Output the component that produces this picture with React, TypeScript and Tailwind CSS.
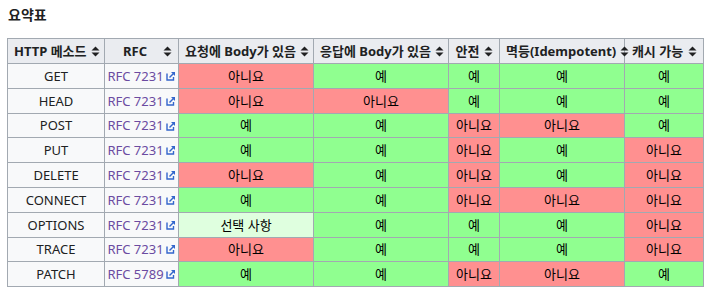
const Y = 'y';
const N = 'n';
const O = 'o';

const rows: { method: string; rfc: string; cells: string[] }[] = [
  { method: 'GET', rfc: 'RFC 7231', cells: [N, Y, Y, Y, Y] },
  { method: 'HEAD', rfc: 'RFC 7231', cells: [N, N, Y, Y, Y] },
  { method: 'POST', rfc: 'RFC 7231', cells: [Y, Y, N, N, Y] },
  { method: 'PUT', rfc: 'RFC 7231', cells: [Y, Y, N, Y, N] },
  { method: 'DELETE', rfc: 'RFC 7231', cells: [N, Y, N, Y, N] },
  { method: 'CONNECT', rfc: 'RFC 7231', cells: [Y, Y, N, N, N] },
  { method: 'OPTIONS', rfc: 'RFC 7231', cells: [O, Y, Y, Y, N] },
  { method: 'TRACE', rfc: 'RFC 7231', cells: [N, Y, Y, Y, N] },
  { method: 'PATCH', rfc: 'RFC 5789', cells: [Y, Y, N, N, Y] },
];

const headers = [
  { label: 'HTTP 메소드', w: 'w-[97px]' },
  { label: 'RFC', w: 'w-[74px]' },
  { label: '요청에 Body가 있음', w: 'w-[135px]' },
  { label: '응답에 Body가 있음', w: 'w-[135px]' },
  { label: '안전', w: 'w-[51px]' },
  { label: '멱등(Idempotent)', w: 'w-[125px]' },
  { label: '캐시 가능', w: 'w-[79px]' },
];

function SortIcon() {
  return (
    <svg width="9" height="11" viewBox="0 0 9 11" className="shrink-0">
      <path d="M4.5 0.5 L8.5 4.5 H0.5 Z" fill="#202122" />
      <path d="M4.5 10.5 L8.5 6.5 H0.5 Z" fill="#202122" />
    </svg>
  );
}

function ExtIcon() {
  return (
    <svg width="10" height="10" viewBox="0 0 10 10" className="inline-block ml-[2px] -mt-[3px] align-middle">
      <path d="M1 2.5 V9 H7.5 V6" fill="none" stroke="#3366cc" strokeWidth="1.4" />
      <path d="M5 1 H9 V5 Z" fill="#3366cc" />
      <path d="M8.5 1.5 L3.5 6.5" stroke="#3366cc" strokeWidth="1.5" />
    </svg>
  );
}

function Cell({ v }: { v: string }) {
  if (v === Y) return <td className="border border-[#a2a9b1] bg-[#90ff90] text-center text-black">예</td>;
  if (v === N) return <td className="border border-[#a2a9b1] bg-[#ff9090] text-center text-black">아니요</td>;
  return <td className="border border-[#a2a9b1] bg-[#dfffdf] text-center text-black">선택 사항</td>;
}

export default function App() {
  return (
    <div
      className="w-[712px] h-[294px] bg-white text-[#202122] text-[13px] overflow-hidden"
      style={{ fontFamily: "'Noto Sans', 'Noto Sans CJK KR', sans-serif" }}
    >
      <div className="pl-[8px] pt-[5px] text-[14px] font-bold leading-[20px]">요약표</div>

      <table className="ml-[7px] mt-[13px] border-collapse table-fixed w-[696px] leading-[18px]">
        <thead>
          <tr className="h-[25px] bg-[#eaecf0]">
            {headers.map((h) => (
              <th key={h.label} className={`${h.w} border border-[#a2a9b1] font-bold px-[6px] whitespace-nowrap`}>
                <div className="flex items-center justify-between gap-1">
                  <span className="flex-1 text-center">{h.label}</span>
                  <SortIcon />
                </div>
              </th>
            ))}
          </tr>
        </thead>
        <tbody>
          {rows.map((r) => (
            <tr key={r.method} className="h-[24.8px]">
              <td className="border border-[#a2a9b1] bg-[#f8f9fa] text-center">{r.method}</td>
              <td className="border border-[#a2a9b1] bg-[#f8f9fa] text-center whitespace-nowrap">
                <span className="text-[#6b4ba1]">{r.rfc}</span>
                <ExtIcon />
              </td>
              {r.cells.map((c, i) => (
                <Cell key={i} v={c} />
              ))}
            </tr>
          ))}
        </tbody>
      </table>
    </div>
  );
}
